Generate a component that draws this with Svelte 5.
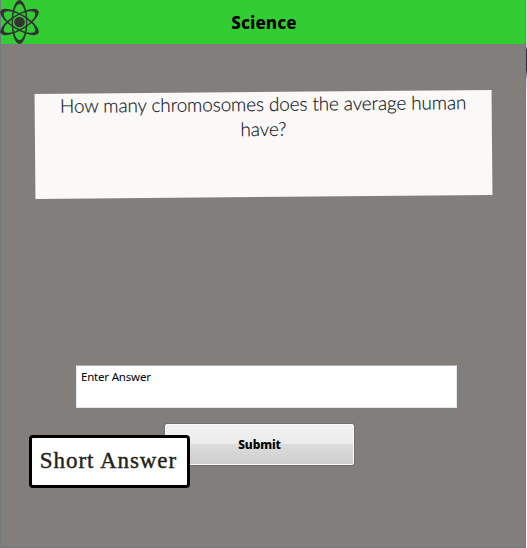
<script>
  let answer = $state('Enter Answer');
  const orbit =
    'M19.5 0A7.9 22 0 0 1 19.5 44A7.9 22 0 0 1 19.5 0Z M19.5 4A6.5 18 0 0 0 19.5 40A6.5 18 0 0 0 19.5 4Z';
</script>

<main>
  <header>
    <svg class="atom" width="40" height="44" viewBox="0 0 40 44" fill="#333">
      <path d={orbit} />
      <path d={orbit} transform="rotate(59 19.5 22)" />
      <path d={orbit} transform="rotate(-59 19.5 22)" />
      <circle cx="19.5" cy="22" r="5.3" />
    </svg>
    <h1>Science</h1>
  </header>
  <section class="question">
    <p>How many chromosomes does the average human</p>
    <p>have?</p>
  </section>
  <form onsubmit={(e) => e.preventDefault()}>
    <textarea bind:value={answer} spellcheck="false"></textarea>
    <div class="actions">
      <button><span>Submit</span></button>
      <div class="kind"><span>Short Answer</span></div>
    </div>
  </form>
</main>

<style>
  :global(body) {
    margin: 0;
    background: linear-gradient(#d5dde8 46px, #24344f 50px, #24344f 70px, #d5dde8 80px, #fff 100px);
    overflow: hidden;
  }
  main {
    box-sizing: border-box;
    width: 526px;
    height: 548px;
    background: #827e7c;
    border: solid #747b80;
    border-width: 0 1px 1px;
  }
  header {
    position: relative;
    display: flex;
    justify-content: center;
    height: 44px;
    background: #32cd32;
  }
  .atom { position: absolute; left: -1px; top: 0; }
  h1 {
    margin: 0;
    padding-left: 2px;
    font: 800 17px/46px 'Noto Sans', sans-serif;
    color: #000;
    letter-spacing: 0.1px;
  }
  .question {
    box-sizing: border-box;
    width: 457px;
    height: 105px;
    margin: 48px 0 0 34px;
    background: #faf9f8;
    transform: rotate(-0.5deg);
    text-align: center;
    color: #10131c;
    font: 300 19px/25px Lato, sans-serif;
    letter-spacing: -0.15px;
    -webkit-text-stroke: 0.15px #10131c;
  }
  p { margin: 0; white-space: nowrap; position: relative; top: -1px; }
  form { margin: 168px 0 0 75px; width: 381px; }
  textarea {
    display: block;
    box-sizing: border-box;
    width: 381px;
    height: 43px;
    padding: 3px 4px;
    border: 1px solid #e3e9ef;
    border-top-color: #abadb3;
    border-radius: 1px;
    background: #fff;
    color: #000;
    font: 11.5px/15px 'Noto Sans', sans-serif;
    letter-spacing: -0.2px;
    resize: none;
    outline: none;
    overflow: hidden;
  }
  .actions { position: relative; padding: 15px 0 0 88px; }
  button {
    display: block;
    box-sizing: border-box;
    width: 191px;
    height: 43px;
    padding: 0;
    border: 1px solid #707070;
    border-radius: 3px;
    background: linear-gradient(#f2f2f2, #ebebeb 50%, #dddddd 50%, #cdcdcd);
    box-shadow: inset 0 0 0 1px #fafafa;
    color: #000;
    font: 800 12px/40px 'Noto Sans', sans-serif;
    letter-spacing: -0.1px;
  }
  .kind {
    position: absolute;
    left: -47px;
    top: 27px;
    box-sizing: border-box;
    width: 161px;
    height: 53px;
    border: 3px solid #000;
    border-radius: 4px;
    background: #fff;
    color: #22231a;
    text-align: center;
    white-space: nowrap;
    font: 23px/46px 'Liberation Serif', serif;
    letter-spacing: 0.95px;
    -webkit-text-stroke: 0.4px #22231a;
  }
  .kind span { position: relative; left: -1px; }
</style>
